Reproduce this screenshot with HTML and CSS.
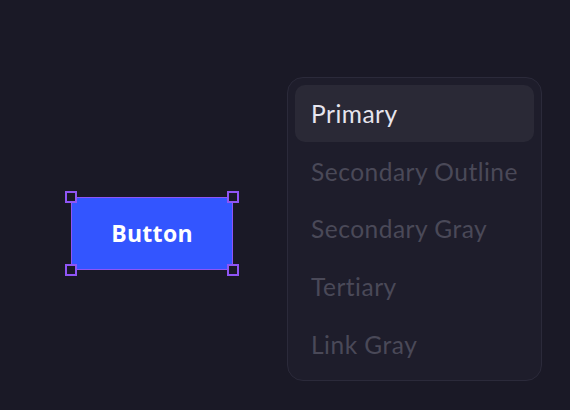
FILE: index.html
```html
<!DOCTYPE html>
<html>
<head>
<meta charset="utf-8">
<link rel="stylesheet" href="styles.css">
</head>
<body>
<div class="stage">
  <div class="btn-wrap">
    <div class="btn">Button</div>
    <span class="handle tl"></span>
    <span class="handle tr"></span>
    <span class="handle bl"></span>
    <span class="handle br"></span>
  </div>
  <ul class="menu">
    <li class="item active">Primary</li>
    <li class="item">Secondary Outline</li>
    <li class="item">Secondary Gray</li>
    <li class="item">Tertiary</li>
    <li class="item">Link Gray</li>
  </ul>
</div>
</body>
</html>
```
FILE: styles.css
```css
html, body {
  margin: 0;
  padding: 0;
  background: #1a1926;
  width: 570px;
  height: 410px;
  overflow: hidden;
}
.stage {
  display: flex;
  align-items: flex-start;
  padding: 77px 0 0 71px;
}
.btn-wrap {
  position: relative;
  margin-top: 120px;
  width: 162px;
  height: 73px;
}
.btn {
  box-sizing: border-box;
  width: 162px;
  height: 73px;
  background: #3355ff;
  border: 1.5px solid #8f55f5;
  color: #ffffff;
  font-family: "Open Sans", "Liberation Sans", sans-serif;
  font-weight: 700;
  font-size: 23px;
  display: flex;
  align-items: center;
  justify-content: center;
  letter-spacing: 0.3px;
  padding-bottom: 2px;
}
.handle {
  position: absolute;
  box-sizing: border-box;
  width: 12px;
  height: 12px;
  border: 2px solid #8f55f5;
  background: #1a1926;
}
.tl { left: -6px; top: -6px; }
.tr { right: -6px; top: -6px; }
.bl { left: -6px; bottom: -6px; }
.br { right: -6px; bottom: -6px; }
.menu {
  list-style: none;
  margin: 0 0 0 54px;
  padding: 7px;
  box-sizing: border-box;
  width: 255px;
  height: 304px;
  background: #1e1d2b;
  border: 1.5px solid #2b2a3a;
  border-radius: 16px;
  display: flex;
  flex-direction: column;
  gap: 1px;
}
.item {
  height: 57px;
  display: flex;
  align-items: center;
  padding-left: 16px;
  border-radius: 10px;
  font-family: "Lato", "Liberation Sans", sans-serif;
  font-size: 24.5px;
  letter-spacing: 0.5px;
  color: #4a4958;
}
.item.active {
  background: #2a2936;
  color: #e6e5ee;
}
```
